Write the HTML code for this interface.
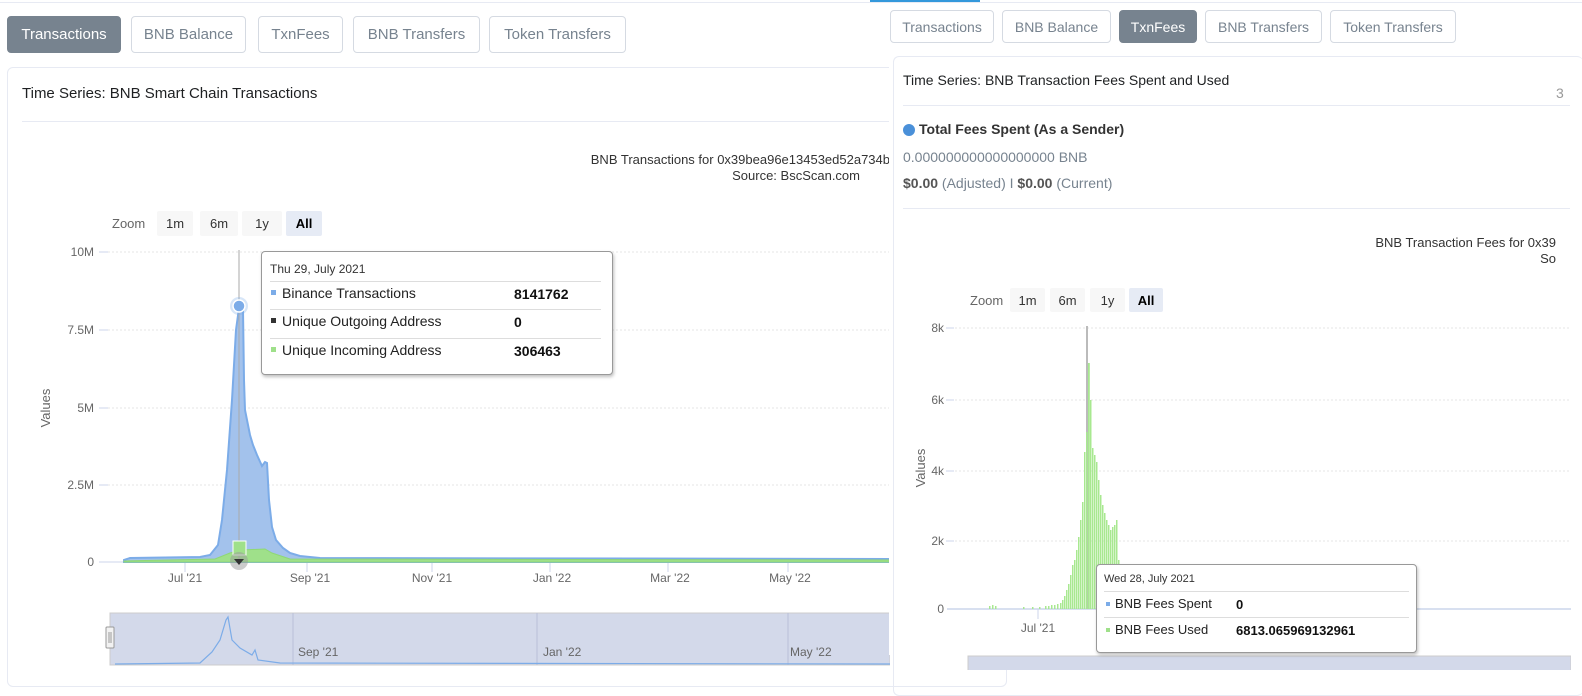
<!DOCTYPE html>
<html><head><meta charset="utf-8"><style>
*{margin:0;padding:0;box-sizing:border-box}
body{width:1582px;height:670px;overflow:hidden;background:#fff;font-family:"Liberation Sans",Arial,sans-serif;position:relative;color:#1e2022}
.a{position:absolute;white-space:nowrap}
.tab{position:absolute;border:1px solid #d5dae2;border-radius:4px;background:#fff;color:#77838f;font-size:15px;display:flex;align-items:center;justify-content:center}
.tab.on{background:#77838f;color:#fff;border-color:#77838f}
.zb{position:absolute;background:#f7f7f7;font-size:13px;color:#333;display:flex;align-items:center;justify-content:center;border-radius:2px}
.zb.on{background:#e6ebf5;font-weight:bold;color:#000}
svg text{font-family:"Liberation Sans",Arial,sans-serif}
</style></head><body>
<div class="a" style="left:0;top:2px;width:1582px;height:1px;background:#e7eaf3"></div>
<div class="a" style="left:870px;top:0;width:110px;height:2px;background:#3498db"></div>

<!-- LEFT -->
<div class="tab on" style="left:7px;top:16px;width:114px;height:37px">Transactions</div>
<div class="tab" style="left:131px;top:16px;width:115px;height:37px">BNB Balance</div>
<div class="tab" style="left:258px;top:16px;width:85px;height:37px">TxnFees</div>
<div class="tab" style="left:353px;top:16px;width:127px;height:37px">BNB Transfers</div>
<div class="tab" style="left:489px;top:16px;width:137px;height:37px">Token Transfers</div>
<div class="a" style="left:7px;top:67px;width:1000px;height:620px;border:1px solid #e7eaf3;border-radius:6px"></div>
<div class="a" style="left:22px;top:85px;font-size:15px;color:#1e2022">Time Series: BNB Smart Chain Transactions</div>
<div class="a" style="left:22px;top:121px;width:980px;height:1px;background:#e7eaf3"></div>

<svg class="a" style="left:0;top:0" width="890" height="670">
<text x="890" y="164" font-size="13" fill="#333" text-anchor="end">BNB Transactions for 0x39bea96e13453ed52a734b</text>
<text x="860" y="180" font-size="13" fill="#333" text-anchor="end">Source: BscScan.com</text>
<text x="112" y="228" font-size="13" fill="#666">Zoom</text>
<g stroke="#e6e6e6" stroke-dasharray="2,2"><line x1="100" y1="252" x2="890" y2="252"/><line x1="100" y1="330" x2="890" y2="330"/><line x1="100" y1="408" x2="890" y2="408"/><line x1="100" y1="485" x2="890" y2="485"/></g>
<g fill="#666" font-size="12" text-anchor="end"><text x="94" y="256">10M</text><text x="94" y="334">7.5M</text><text x="94" y="412">5M</text><text x="94" y="489">2.5M</text><text x="94" y="566">0</text></g>
<g stroke="#ccd6eb"><line x1="99" y1="252" x2="108" y2="252"/><line x1="99" y1="330" x2="108" y2="330"/><line x1="99" y1="408" x2="108" y2="408"/><line x1="99" y1="485" x2="108" y2="485"/><line x1="99" y1="562" x2="108" y2="562"/></g>
<text x="50" y="408" font-size="13" fill="#666" transform="rotate(-90 50 408)" text-anchor="middle">Values</text>
<line x1="100" y1="562" x2="890" y2="562" stroke="#ccd6eb"/>
<g stroke="#ccd6eb"><line x1="185" y1="562" x2="185" y2="572"/><line x1="307" y1="562" x2="307" y2="572"/><line x1="432" y1="562" x2="432" y2="572"/><line x1="550" y1="562" x2="550" y2="572"/><line x1="668" y1="562" x2="668" y2="572"/><line x1="788" y1="562" x2="788" y2="572"/></g>
<g fill="#666" font-size="12" text-anchor="middle"><text x="185" y="582">Jul '21</text><text x="310" y="582">Sep '21</text><text x="432" y="582">Nov '21</text><text x="552" y="582">Jan '22</text><text x="670" y="582">Mar '22</text><text x="790" y="582">May '22</text></g>
<path d="M124,562 L124,560 L130,558 L200,557 L210,555 L218,545 L222,520 L227,470 L232,400 L236,330 L239,308 L243,310 L244,380 L245,410 L247,420 L250,435 L253,445 L257,455 L262,466 L265,462 L267,463 L269,500 L272,527 L276,540 L283,548 L290,553 L300,556 L320,558 L890,559 L890,562 Z" fill="#a3c2ec" stroke="#7cace8" stroke-width="2"/>
<path d="M124,562 L124,561 L215,559 L230,553 L240,550 L265,549 L272,553 L290,559 L890,560 L890,562 Z" fill="#9fe08a" stroke="#8fd876" stroke-width="1"/>
<line x1="239" y1="250" x2="239" y2="562" stroke="#aaa" stroke-width="1"/>
<circle cx="239" cy="306" r="9" fill="#7cace8" opacity=".3"/><circle cx="239" cy="306" r="6" fill="#7cace8" stroke="#fff" stroke-width="1.5"/>
<rect x="233" y="541" width="13" height="14" fill="#9fe08a" stroke="#fff"/>
<circle cx="239" cy="561" r="9" fill="#999" opacity=".5"/><path d="M234,559 L244,559 L239,565 Z" fill="#333"/>
<rect x="110" y="613" width="780" height="52" fill="#d3d9ea" stroke="#ccc"/>
<g stroke="#b8c0d8"><line x1="293" y1="613" x2="293" y2="665"/><line x1="537" y1="613" x2="537" y2="665"/><line x1="788" y1="613" x2="788" y2="665"/></g>
<g fill="#666" font-size="12"><text x="298" y="656">Sep '21</text><text x="543" y="656">Jan '22</text><text x="790" y="656">May '22</text></g>
<path d="M115,664 L200,663 L212,652 L220,640 L226,620 L228,617 L232,640 L240,648 L252,655 L255,650 L258,660 L280,663 L890,664" fill="none" stroke="#7cace8" stroke-width="1.2"/>
<rect x="106" y="627" width="8" height="21" fill="#f2f2f2" stroke="#999" rx="1"/><line x1="109" y1="632" x2="109" y2="643" stroke="#999"/><line x1="111" y1="632" x2="111" y2="643" stroke="#999"/>
</svg>
<div class="zb" style="left:157px;top:211px;width:36px;height:25px">1m</div>
<div class="zb" style="left:200px;top:211px;width:38px;height:25px">6m</div>
<div class="zb" style="left:242px;top:211px;width:40px;height:25px">1y</div>
<div class="zb on" style="left:286px;top:211px;width:36px;height:25px">All</div>

<div class="a" style="left:261px;top:251px;width:352px;height:124px;background:#fff;border:1px solid #999;border-radius:4px;box-shadow:1px 2px 3px rgba(0,0,0,.25)">
 <div class="a" style="left:8px;top:10px;font-size:12px;color:#333">Thu 29, July 2021</div>
 <div class="a" style="left:8px;top:29px;width:331px;height:1px;background:#ddd"></div>
 <div class="a" style="left:8px;top:57px;width:331px;height:1px;background:#ddd"></div>
 <div class="a" style="left:8px;top:86px;width:331px;height:1px;background:#ddd"></div>
 <div class="a" style="left:9px;top:38px;width:5px;height:5px;background:#7cace8"></div>
 <div class="a" style="left:9px;top:66px;width:5px;height:5px;background:#333"></div>
 <div class="a" style="left:9px;top:95px;width:5px;height:5px;background:#9fe08a"></div>
 <div class="a" style="left:20px;top:33px;font-size:14px;color:#222">Binance Transactions</div>
 <div class="a" style="left:20px;top:61px;font-size:14px;color:#222">Unique Outgoing Address</div>
 <div class="a" style="left:20px;top:90px;font-size:14px;color:#222">Unique Incoming Address</div>
 <div class="a" style="left:252px;top:34px;font-size:14px;font-weight:bold;color:#111">8141762</div>
 <div class="a" style="left:252px;top:62px;font-size:14px;font-weight:bold;color:#111">0</div>
 <div class="a" style="left:252px;top:91px;font-size:14px;font-weight:bold;color:#111">306463</div>
</div>

<!-- RIGHT OVERLAY -->
<div class="a" style="left:889px;top:3px;width:682px;height:652px;background:#fff"></div>
<div class="a" style="left:968px;top:655px;width:603px;height:15px;background:#fff"></div>
<div class="a" style="left:1571px;top:56px;width:11px;height:12px;background:#fff"></div>
<div class="tab" style="left:890px;top:10px;width:104px;height:33px;font-size:14px">Transactions</div>
<div class="tab" style="left:1002px;top:10px;width:109px;height:33px;font-size:14px">BNB Balance</div>
<div class="tab on" style="left:1119px;top:10px;width:78px;height:33px;font-size:14px">TxnFees</div>
<div class="tab" style="left:1205px;top:10px;width:117px;height:33px;font-size:14px">BNB Transfers</div>
<div class="tab" style="left:1330px;top:10px;width:126px;height:33px;font-size:14px">Token Transfers</div>
<div class="a" style="left:893px;top:56px;width:690px;height:640px;border:1px solid #e7eaf3;border-radius:6px;border-right:none"></div>
<div class="a" style="left:903px;top:72px;font-size:14px;color:#1e2022">Time Series: BNB Transaction Fees Spent and Used</div>
<div class="a" style="left:903px;top:105px;width:667px;height:1px;background:#e7eaf3"></div>
<div class="a" style="left:903px;top:124px;width:12px;height:12px;border-radius:50%;background:#4a90d9"></div>
<div class="a" style="left:919px;top:121px;font-size:14px;font-weight:bold;color:#333">Total Fees Spent (As a Sender)</div>
<div class="a" style="left:903px;top:149px;font-size:14px;color:#77838f">0.000000000000000000 BNB</div>
<div class="a" style="left:903px;top:175px;font-size:14px;color:#77838f"><b style="color:#555">$0.00</b> (Adjusted) I <b style="color:#555">$0.00</b> (Current)</div>
<div class="a" style="left:903px;top:208px;width:667px;height:1px;background:#e7eaf3"></div>
<div class="a" style="left:1556px;top:85px;font-size:14px;color:#999">3</div>

<svg class="a" style="left:889px;top:0" width="682" height="670">
<text x="667" y="247" font-size="13" fill="#333" text-anchor="end">BNB Transaction Fees for 0x39</text>
<text x="667" y="263" font-size="13" fill="#333" text-anchor="end">So</text>
<text x="81" y="305" font-size="13" fill="#666">Zoom</text>
<g stroke="#e6e6e6" stroke-dasharray="2,2"><line x1="58" y1="328" x2="682" y2="328"/><line x1="58" y1="400" x2="682" y2="400"/><line x1="58" y1="471" x2="682" y2="471"/><line x1="58" y1="541" x2="682" y2="541"/></g>
<g stroke="#ccd6eb"><line x1="57" y1="328" x2="65" y2="328"/><line x1="57" y1="400" x2="65" y2="400"/><line x1="57" y1="471" x2="65" y2="471"/><line x1="57" y1="541" x2="65" y2="541"/></g>
<g fill="#666" font-size="12" text-anchor="end"><text x="55" y="332">8k</text><text x="55" y="404">6k</text><text x="55" y="475">4k</text><text x="55" y="545">2k</text><text x="55" y="613">0</text></g>
<text x="36" y="468" font-size="13" fill="#666" transform="rotate(-90 36 468)" text-anchor="middle">Values</text>
<line x1="58" y1="609" x2="682" y2="609" stroke="#ccd6eb" stroke-width="1.5"/>
<g stroke="#ccd6eb"><line x1="149" y1="609" x2="149" y2="619"/><line x1="478" y1="609" x2="478" y2="619"/></g>
<g fill="#666" font-size="12" text-anchor="middle"><text x="149" y="632">Jul '21</text><text x="478" y="632">Mar '22</text></g>
<line x1="198" y1="326" x2="198" y2="609" stroke="#bbb" stroke-width="2"/>
<g fill="#a8e890">
<rect x="100" y="606" width="1.5" height="3"/><rect x="103" y="605" width="1.5" height="4"/><rect x="106" y="606" width="1.5" height="3"/>
<rect x="134" y="607" width="1.5" height="2"/><rect x="143" y="607" width="1.5" height="2"/><rect x="150" y="607" width="1.5" height="2"/>
<rect x="156" y="606" width="1.5" height="3"/><rect x="159" y="606" width="1.5" height="3"/><rect x="162" y="605" width="1.5" height="4"/><rect x="165" y="605" width="1.5" height="4"/><rect x="168" y="604" width="1.5" height="5"/>
<rect x="171" y="603" width="1.5" height="6"/><rect x="173" y="600" width="1.5" height="9"/><rect x="175" y="596" width="1.5" height="13"/><rect x="177" y="590" width="1.5" height="19"/><rect x="179" y="584" width="1.5" height="25"/>
<rect x="181" y="575" width="1.5" height="34"/><rect x="183" y="565" width="1.5" height="44"/><rect x="185" y="560" width="1.5" height="49"/><rect x="187" y="550" width="1.5" height="59"/><rect x="189" y="537" width="1.5" height="72"/>
<rect x="191" y="520" width="1.5" height="89"/><rect x="193" y="502" width="1.5" height="107"/><rect x="195" y="452" width="1.5" height="157"/><rect x="197" y="432" width="1.5" height="177"/>
<rect x="199" y="363" width="1.8" height="246"/><rect x="201" y="400" width="1.5" height="209"/><rect x="203" y="448" width="1.5" height="161"/><rect x="205" y="455" width="1.5" height="154"/><rect x="207" y="462" width="1.5" height="147"/>
<rect x="209" y="480" width="1.5" height="129"/><rect x="211" y="495" width="1.5" height="114"/><rect x="213" y="505" width="1.5" height="104"/><rect x="215" y="513" width="1.5" height="96"/><rect x="217" y="520" width="1.5" height="89"/>
<rect x="219" y="525" width="1.5" height="84"/><rect x="221" y="530" width="1.5" height="79"/><rect x="223" y="527" width="1.5" height="82"/><rect x="225" y="525" width="1.5" height="84"/><rect x="227" y="520" width="1.5" height="89"/><rect x="229" y="560" width="1.5" height="49"/>
</g>
<rect x="79" y="656" width="603" height="15" fill="#d3d9ea" stroke="#ccc"/>
</svg>
<div class="zb" style="left:1010px;top:288px;width:35px;height:24px">1m</div>
<div class="zb" style="left:1050px;top:288px;width:35px;height:24px">6m</div>
<div class="zb" style="left:1090px;top:288px;width:35px;height:24px">1y</div>
<div class="zb on" style="left:1129px;top:288px;width:34px;height:24px">All</div>

<div class="a" style="left:1096px;top:564px;width:321px;height:89px;background:#fff;border:1px solid #999;border-radius:4px;box-shadow:1px 2px 3px rgba(0,0,0,.25)">
 <div class="a" style="left:7px;top:8px;font-size:11px;color:#333">Wed 28, July 2021</div>
 <div class="a" style="left:7px;top:26px;width:305px;height:1px;background:#ddd"></div>
 <div class="a" style="left:7px;top:52px;width:305px;height:1px;background:#ddd"></div>
 <div class="a" style="left:9px;top:37px;width:4px;height:4px;background:#7cace8"></div>
 <div class="a" style="left:9px;top:63px;width:4px;height:4px;background:#9fe08a"></div>
 <div class="a" style="left:18px;top:31px;font-size:13px;color:#222">BNB Fees Spent</div>
 <div class="a" style="left:18px;top:57px;font-size:13px;color:#222">BNB Fees Used</div>
 <div class="a" style="left:139px;top:32px;font-size:13px;font-weight:bold;color:#111">0</div>
 <div class="a" style="left:139px;top:58px;font-size:13px;font-weight:bold;color:#111">6813.065969132961</div>
</div>
</body></html>
